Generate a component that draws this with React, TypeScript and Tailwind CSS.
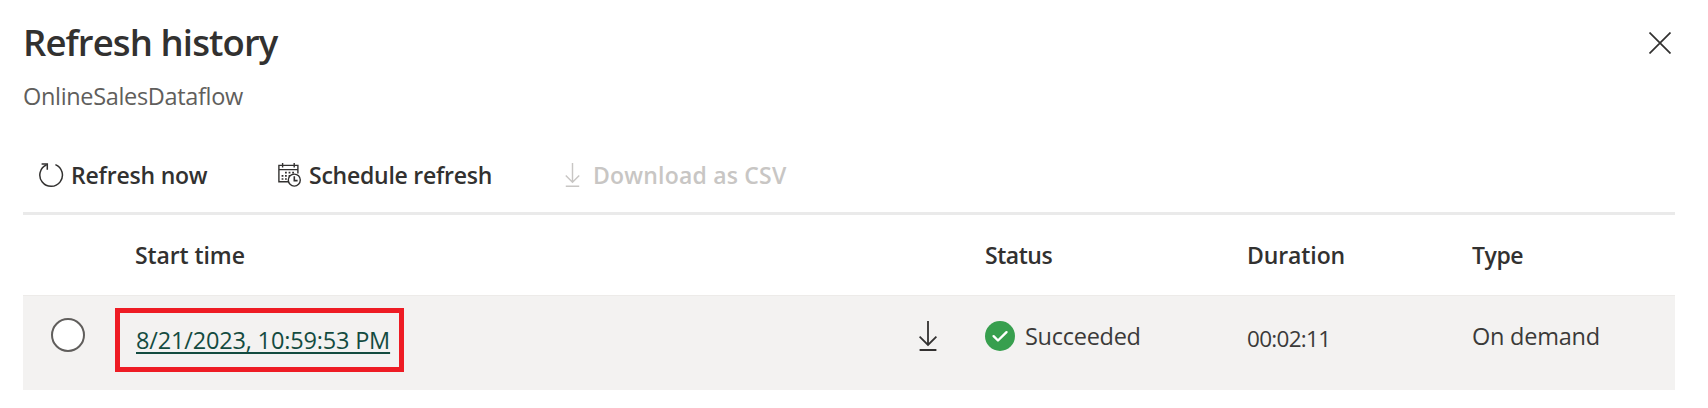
import type { ReactNode } from 'react';

function RefreshIcon() {
  return (
    <svg className="h-[26px] w-[26px] shrink-0" viewBox="0 0 26 26" fill="none" stroke="#323130" strokeWidth="1.5">
      <path d="M17.4 2.6a11.3 11.3 0 1 1-8.8.1" />
      <path d="M3.6 1.9h5.7v5.9" />
    </svg>
  );
}

function ScheduleIcon() {
  return (
    <svg className="h-6 w-6 shrink-0" viewBox="0 0 24 24" fill="none" stroke="#323130" strokeWidth="1.4">
      <path d="M11.5 18.8H.9V2.4h19v8.2M.9 6.6h19M4.6 0v4.6M16.2 0v4.6" />
      <path d="M7 9.7h1.8M10.6 9.7h1.8M14.2 9.7H16M3.6 12.9h1.8M7 12.9h1.8M10.6 12.9h1.8M3.6 16h1.8M7 16h1.8" strokeWidth="1.7" />
      <circle cx="16.3" cy="17.1" r="6" fill="#fff" />
      <path d="M16.3 13.2v4.4h3.3" strokeWidth="1.6" />
    </svg>
  );
}

function DownloadIcon({ className }: { className: string }) {
  return (
    <svg className={className} viewBox="0 0 18 30" fill="none" stroke="currentColor" strokeWidth="1.8">
      <path d="M9 0v24M.6 15.6 9 24l8.4-8.4M.6 29h16.8" />
    </svg>
  );
}

function SuccessIcon() {
  return (
    <svg className="h-[30px] w-[30px] shrink-0" viewBox="0 0 30 30" fill="none">
      <circle cx="15" cy="15" r="15" fill="#379f4e" />
      <path d="m8.6 15.2 4.4 4.3 8.5-8.3" stroke="#fff" strokeWidth="2.4" strokeLinecap="round" strokeLinejoin="round" />
    </svg>
  );
}

function HeaderCell({ children, className }: { children: ReactNode; className: string }) {
  return <div className={`text-[23px] font-semibold leading-8 text-[#323130] ${className}`}>{children}</div>;
}

export default function App() {
  return (
    <main className="flex h-[408px] w-full flex-col whitespace-nowrap bg-white pl-[23px] pr-[33px] pt-[17px] font-['Open_Sans','Noto_Sans',sans-serif] text-[#3b3a39]">
      <header className="flex items-start justify-between">
        <div className="flex flex-col">
          <h1 className="h-[50px] text-[36.5px] font-semibold leading-[50px] tracking-[-0.9px] text-[#323130]">Refresh history</h1>
          <p className="mt-[13px] text-[23.5px] leading-8 tracking-[-0.33px] text-[#605e5c]">OnlineSalesDataflow</p>
        </div>
        <button aria-label="Close" className="mr-1 mt-[15px]">
          <svg className="h-[22px] w-[22px]" viewBox="0 0 22 22" fill="none" stroke="#323130" strokeWidth="1.7">
            <path d="m.5.5 21 21M21.5.5l-21 21" />
          </svg>
        </button>
      </header>

      <nav className="mt-[39px] flex h-12 shrink-0 items-center text-[23px] font-semibold leading-8 text-[#323130]">
        <button className="flex w-[255px] items-center pl-[15px]">
          <RefreshIcon />
          <span className="ml-[7px] tracking-[-0.2px]">Refresh now</span>
        </button>
        <button className="flex w-[287px] items-center">
          <ScheduleIcon />
          <span className="ml-[7px] tracking-[-0.24px]">Schedule refresh</span>
        </button>
        <button className="flex items-center text-[#c8c6c4]">
          <DownloadIcon className="h-6 w-[15px]" />
          <span className="ml-[13px] tracking-[0.2px]">Download as CSV</span>
        </button>
      </nav>

      <section className="mt-[13px] border-t-[3px] border-[#eaeaea]">
        <div className="grid h-20 grid-cols-[112px_849px_263px_225px_1fr] items-center">
          <span />
          <HeaderCell className="tracking-[-0.1px]">Start time</HeaderCell>
          <HeaderCell className="pl-px tracking-[-0.47px]">Status</HeaderCell>
          <HeaderCell className="tracking-[-0.1px]">Duration</HeaderCell>
          <HeaderCell className="tracking-[-0.45px]">Type</HeaderCell>
        </div>
        <div className="grid h-[95px] grid-cols-[92px_870px_262px_225px_1fr] items-start border-t border-[#edebe9] bg-[#f3f2f1] text-[23.5px] leading-8">
          <div className="ml-7 mt-[22px] h-[34px] w-[34px] rounded-full border-2 border-[#605e5c] bg-white" />
          <div className="flex items-start justify-between pr-12 pt-3">
            <div className="flex h-16 w-[289px] items-center border-[5px] border-[#ee1c24] pl-4">
              <a href="#" className="tracking-[-0.17px] text-[#134b40] underline decoration-2 underline-offset-[3px]">8/21/2023, 10:59:53 PM</a>
            </div>
            <DownloadIcon className="mt-[13px] h-[30px] w-[18px] text-[#323130]" />
          </div>
          <div className="flex items-center pt-6">
            <SuccessIcon />
            <span className="ml-[10px] tracking-[-0.27px]">Succeeded</span>
          </div>
          <div className="pt-[27px] text-[22.5px] tracking-[-0.7px]">00:02:11</div>
          <div className="pt-6 tracking-[-0.24px]">On demand</div>
        </div>
      </section>
    </main>
  );
}
